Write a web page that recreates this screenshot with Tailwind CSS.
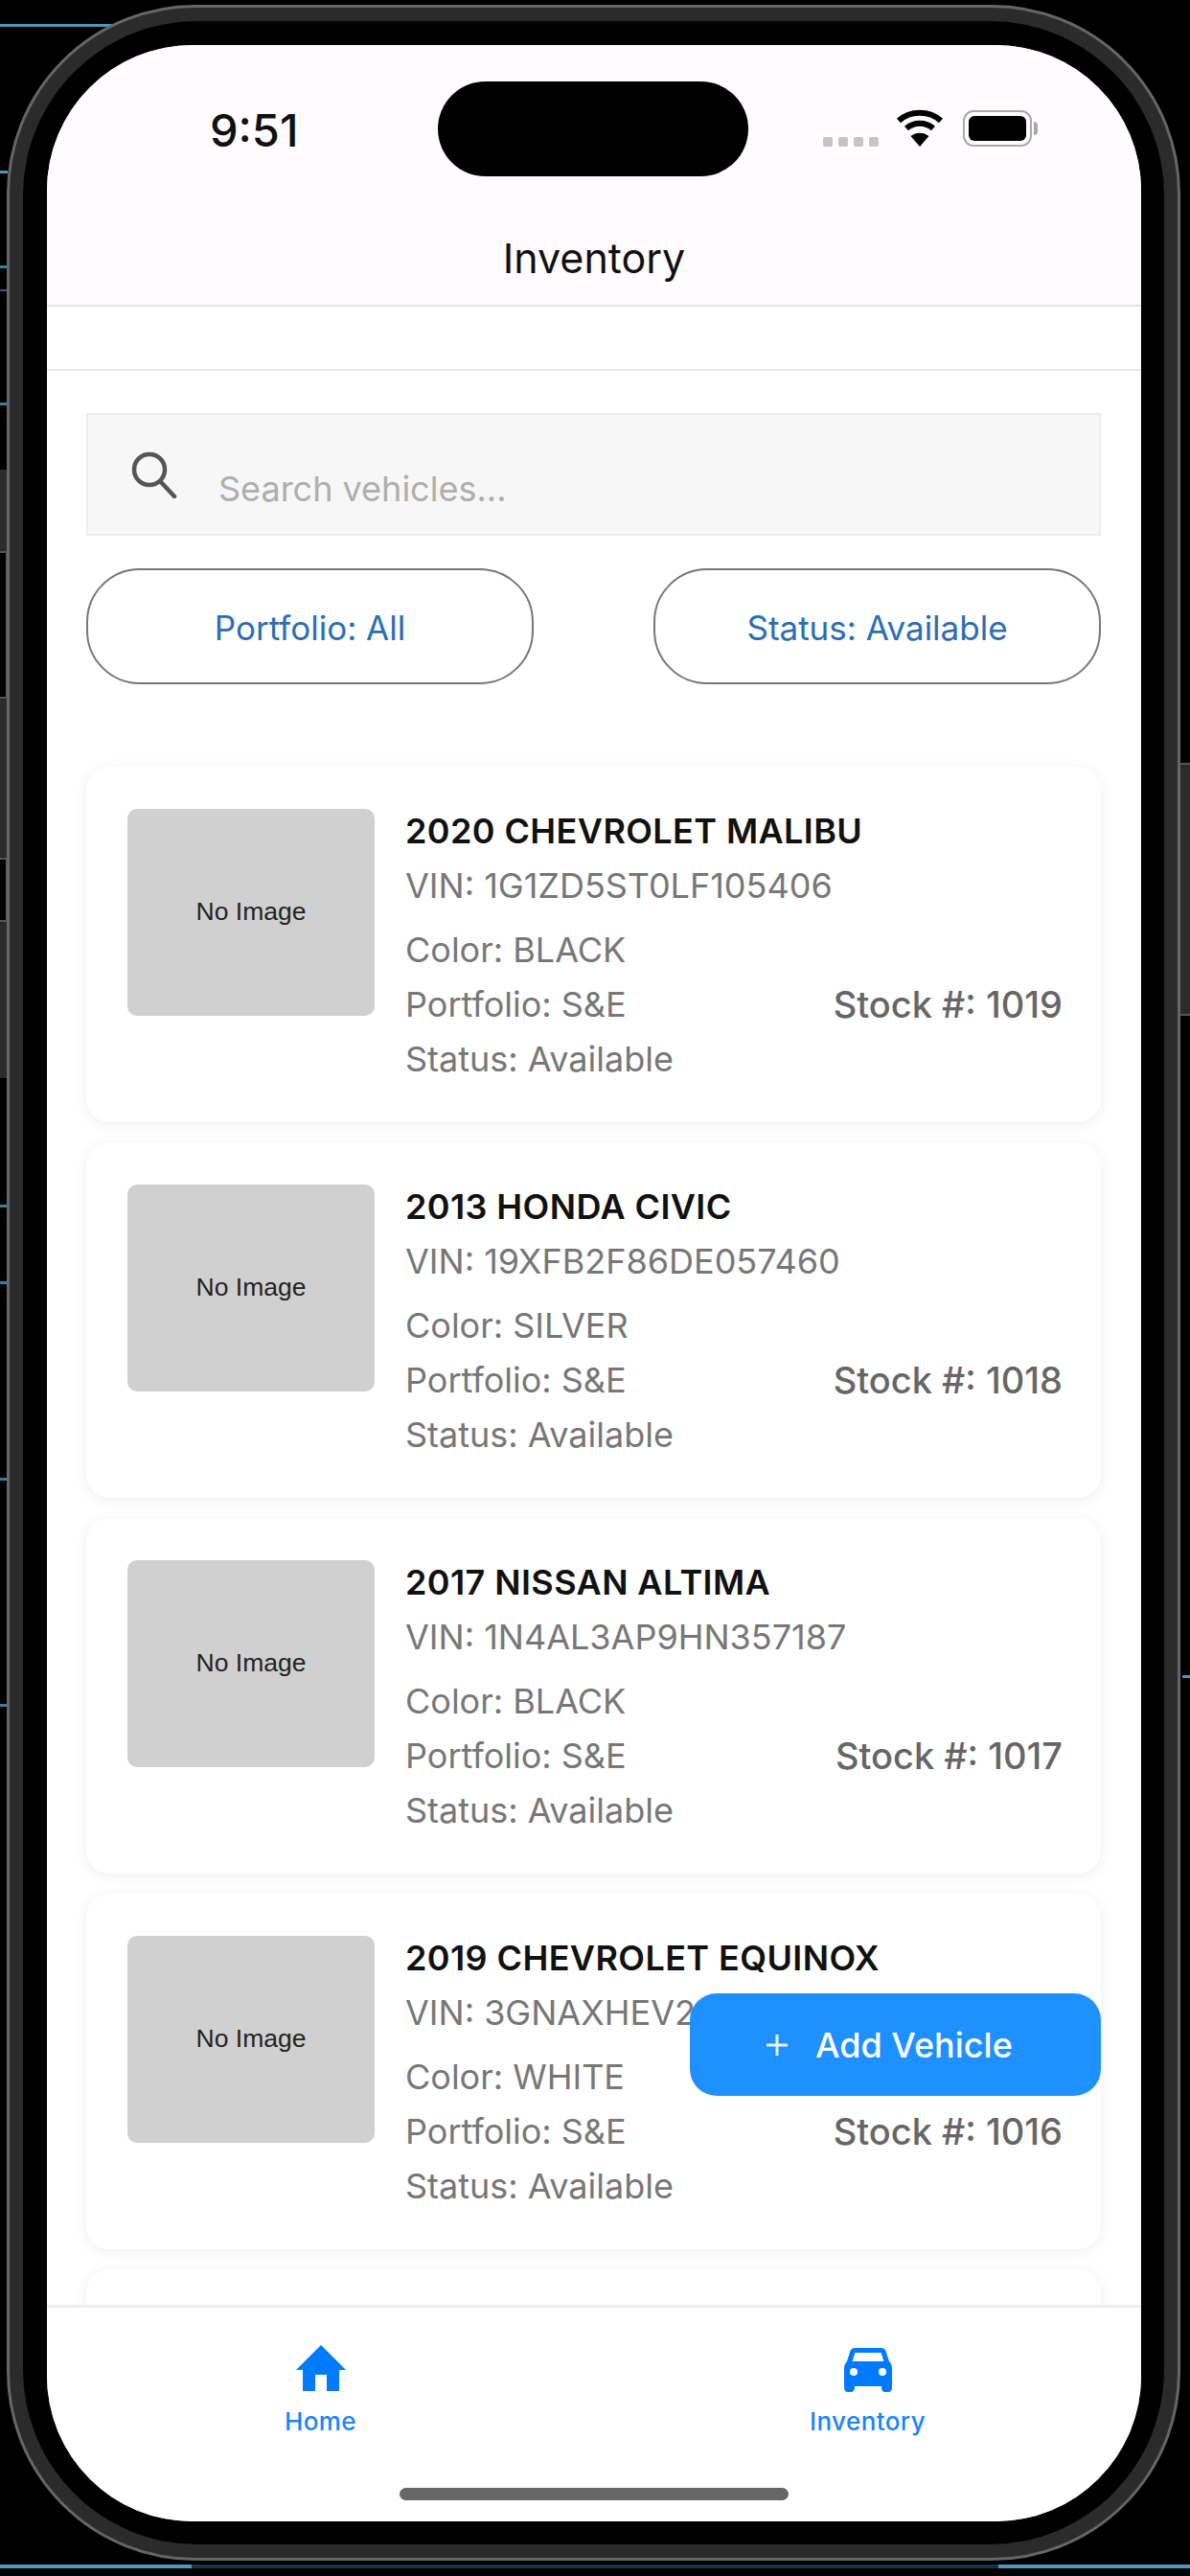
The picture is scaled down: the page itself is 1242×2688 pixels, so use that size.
<!DOCTYPE html>
<html>
<head>
<meta charset="utf-8">
<script src="https://cdn.jsdelivr.net/npm/@tailwindcss/browser@4"></script>
<title>Inventory</title>
</head>
<body class="bg-black font-['Inter',sans-serif]">
<div class="relative w-[1242px] h-[2688px] overflow-hidden bg-black pl-[7px] pt-[5px]">
  <!-- backdrop behind the device -->
  <div class="absolute left-0 top-[25px] w-[118px] h-[3px] bg-[#4a9ab8]"></div>
  <div class="absolute left-0 top-[178px] w-[8px] h-[3px] bg-[#4a9ab8]"></div>
  <div class="absolute left-0 top-[277px] w-[8px] h-[3px] bg-[#3a7f99]"></div>
  <div class="absolute left-0 top-[302px] w-[8px] h-[2px] bg-[#2a5f73]"></div>
  <div class="absolute left-0 top-[420px] w-[8px] h-[3px] bg-[#3a7f99]"></div>
  <div class="absolute left-0 top-[1257px] w-[8px] h-[3px] bg-[#3a7f99]"></div>
  <div class="absolute left-0 top-[1337px] w-[8px] h-[3px] bg-[#3a7f99]"></div>
  <div class="absolute left-0 top-[1542px] w-[8px] h-[3px] bg-[#3a7f99]"></div>
  <div class="absolute left-0 top-[1778px] w-[8px] h-[3px] bg-[#3a7f99]"></div>
  <div class="absolute right-0 top-[1748px] w-[8px] h-[3px] bg-[#4a9ab8]"></div>
  <div class="absolute left-0 right-0 top-[2676px] h-[4px] bg-[#143642]"></div>
  <div class="absolute left-0 top-[2676px] w-[200px] h-[4px] bg-[#4a9ab8]"></div>
  <div class="absolute right-0 top-[2676px] w-[200px] h-[4px] bg-[#4a9ab8]"></div>
  <!-- hardware buttons -->
  <div class="absolute left-0 top-[490px] w-[8px] h-[85px] bg-[#2b2b2b]"></div>
  <div class="absolute left-0 top-[575px] w-[8px] h-[154px] border-y-2 border-r-2 border-[#555] bg-black"></div>
  <div class="absolute left-0 top-[729px] w-[8px] h-[166px] bg-[#2b2b2b]"></div>
  <div class="absolute left-0 top-[895px] w-[8px] h-[67px] border-y-2 border-r-2 border-[#555] bg-black"></div>
  <div class="absolute left-0 top-[962px] w-[8px] h-[163px] bg-[#2b2b2b]"></div>
  <div class="absolute right-0 top-[796px] w-[12px] h-[264px] bg-[#2b2b2b] border-y-2 border-[#555]"></div>

  <!-- device -->
  <div class="relative w-[1225px] h-[2667px] rounded-[197px] border-[3px] border-[#666] bg-[#2b2b2b] p-[14px]">
    <div class="w-full h-full rounded-[182px] bg-black pl-[25px] pr-[24px] pt-[25px] pb-[24px]">
      <div class="relative w-[1142px] h-[2584px] rounded-[152px] overflow-hidden bg-white flex flex-col">

        <!-- header -->
        <div class="h-[273px] shrink-0 bg-[#fffcff] border-b-2 border-[#e4e2e4] flex flex-col">
          <div class="h-[150px] shrink-0 relative">
            <span class="absolute left-[170px] top-[57px] text-[47px] leading-[64px] font-medium text-[#111]">9:51</span>
            <div class="absolute left-[408px] top-[38px] w-[324px] h-[99px] rounded-full bg-black"></div>
            <div class="absolute left-[810px] top-[96px] flex gap-[6px]">
              <span class="w-[10px] h-[10px] rounded-[2px] bg-[#c4c4c4]"></span>
              <span class="w-[10px] h-[10px] rounded-[2px] bg-[#c4c4c4]"></span>
              <span class="w-[10px] h-[10px] rounded-[2px] bg-[#c4c4c4]"></span>
              <span class="w-[10px] h-[10px] rounded-[2px] bg-[#c4c4c4]"></span>
            </div>
            <svg class="absolute left-[886px] top-[67px]" width="50" height="40" viewBox="0 0 50 40" fill="none">
              <path d="M3 12 C15 1 35 1 47 12" stroke="#000" stroke-width="6"/>
              <path d="M11 20 C19 13 31 13 39 20" stroke="#000" stroke-width="6"/>
              <path d="M25 39 L15.5 28 C21 23.500 29 23.500 34.500 28 Z" fill="#000"/>
            </svg>
            <div class="absolute left-[956px] top-[68px] w-[72px] h-[38px] rounded-[11px] border-[2px] border-[#a8a8a8] p-[4px]">
              <div class="w-full h-full rounded-[6px] bg-black"></div>
            </div>
            <div class="absolute left-[1030px] top-[80px] w-[4px] h-[14px] rounded-r-full bg-[#a8a8a8]"></div>
          </div>
          <div class="text-center text-[43px] leading-[50px] mt-[47px] font-normal text-[#111]">Inventory</div>
        </div>

        <!-- thin bar -->
        <div class="h-[67px] shrink-0 bg-white border-b-2 border-[#e8e8e8]"></div>

        <!-- scroll content -->
        <div class="flex-1 min-h-0 overflow-hidden pl-[41px] pr-[42px] pt-[44px]">
          <div class="h-[128px] bg-[#f7f7f7] border-2 border-[#ececec] flex items-start">
            <svg class="ml-[45px] mt-[37px] shrink-0" width="48" height="50" viewBox="0 0 48 50" fill="none">
              <circle cx="19" cy="20" r="16" stroke="#555" stroke-width="4.500"/>
              <path d="M31 33 L45 48" stroke="#555" stroke-width="4.500" stroke-linecap="round"/>
            </svg>
            <span class="ml-[43px] mt-[55px] text-[36px] leading-[44px] text-[#aeaeae]">Search vehicles...</span>
          </div>

          <div class="mt-[34px] flex justify-between">
            <div class="w-[467px] h-[121px] rounded-[56px] border-2 border-[#77777c] flex items-center justify-center pt-[4px] text-[35px] text-[#2a6eb5]">Portfolio: All</div>
            <div class="w-[467px] h-[121px] rounded-[56px] border-2 border-[#77777c] flex items-center justify-center pt-[4px] text-[35px] text-[#2a6eb5]">Status: Available</div>
          </div>

          <div class="mt-[86px] flex flex-col gap-[21px]">
            <div class="h-[371px] rounded-[24px] bg-white shadow-[0_2px_14px_rgba(0,0,0,0.07)] pl-[43px] pr-[40px] pt-[44px] flex gap-[32px]">
              <div class="w-[258px] h-[216px] shrink-0 rounded-[10px] bg-[#d0d0d0] flex items-center justify-center font-['Liberation_Sans',sans-serif] text-[26.5px] text-[#222]">No Image</div>
              <div class="flex-1 min-w-0">
                <div class="text-[36px] leading-[57px] font-semibold tracking-[0.4px] text-[#111] -mt-[5px]">2020 CHEVROLET MALIBU</div>
                <div class="text-[36px] leading-[57px] text-[#777]">VIN: 1G1ZD5ST0LF105406</div>
                <div class="mt-[10px] flex items-center justify-between">
                  <div class="text-[36px] leading-[57px] text-[#777]">
                    <div>Color: BLACK</div>
                    <div>Portfolio: S&amp;E</div>
                    <div>Status: Available</div>
                  </div>
                  <div class="text-[38px] font-medium text-[#666]">Stock #: 1019</div>
                </div>
              </div>
            </div>

            <div class="h-[371px] rounded-[24px] bg-white shadow-[0_2px_14px_rgba(0,0,0,0.07)] pl-[43px] pr-[40px] pt-[44px] flex gap-[32px]">
              <div class="w-[258px] h-[216px] shrink-0 rounded-[10px] bg-[#d0d0d0] flex items-center justify-center font-['Liberation_Sans',sans-serif] text-[26.5px] text-[#222]">No Image</div>
              <div class="flex-1 min-w-0">
                <div class="text-[36px] leading-[57px] font-semibold tracking-[0.4px] text-[#111] -mt-[5px]">2013 HONDA CIVIC</div>
                <div class="text-[36px] leading-[57px] text-[#777]">VIN: 19XFB2F86DE057460</div>
                <div class="mt-[10px] flex items-center justify-between">
                  <div class="text-[36px] leading-[57px] text-[#777]">
                    <div>Color: SILVER</div>
                    <div>Portfolio: S&amp;E</div>
                    <div>Status: Available</div>
                  </div>
                  <div class="text-[38px] font-medium text-[#666]">Stock #: 1018</div>
                </div>
              </div>
            </div>

            <div class="h-[371px] rounded-[24px] bg-white shadow-[0_2px_14px_rgba(0,0,0,0.07)] pl-[43px] pr-[40px] pt-[44px] flex gap-[32px]">
              <div class="w-[258px] h-[216px] shrink-0 rounded-[10px] bg-[#d0d0d0] flex items-center justify-center font-['Liberation_Sans',sans-serif] text-[26.5px] text-[#222]">No Image</div>
              <div class="flex-1 min-w-0">
                <div class="text-[36px] leading-[57px] font-semibold tracking-[0.4px] text-[#111] -mt-[5px]">2017 NISSAN ALTIMA</div>
                <div class="text-[36px] leading-[57px] text-[#777]">VIN: 1N4AL3AP9HN357187</div>
                <div class="mt-[10px] flex items-center justify-between">
                  <div class="text-[36px] leading-[57px] text-[#777]">
                    <div>Color: BLACK</div>
                    <div>Portfolio: S&amp;E</div>
                    <div>Status: Available</div>
                  </div>
                  <div class="text-[38px] font-medium text-[#666]">Stock #: 1017</div>
                </div>
              </div>
            </div>

            <div class="h-[371px] rounded-[24px] bg-white shadow-[0_2px_14px_rgba(0,0,0,0.07)] pl-[43px] pr-[40px] pt-[44px] flex gap-[32px]">
              <div class="w-[258px] h-[216px] shrink-0 rounded-[10px] bg-[#d0d0d0] flex items-center justify-center font-['Liberation_Sans',sans-serif] text-[26.5px] text-[#222]">No Image</div>
              <div class="flex-1 min-w-0">
                <div class="text-[36px] leading-[57px] font-semibold tracking-[0.4px] text-[#111] -mt-[5px]">2019 CHEVROLET EQUINOX</div>
                <div class="text-[36px] leading-[57px] text-[#777]">VIN: 3GNAXHEV2</div>
                <div class="mt-[10px] flex items-center justify-between">
                  <div class="text-[36px] leading-[57px] text-[#777]">
                    <div>Color: WHITE</div>
                    <div>Portfolio: S&amp;E</div>
                    <div>Status: Available</div>
                  </div>
                  <div class="text-[38px] font-medium text-[#666]">Stock #: 1016</div>
                </div>
              </div>
            </div>

            <div class="h-[371px] shrink-0 rounded-[24px] bg-white shadow-[0_2px_14px_rgba(0,0,0,0.07)]"></div>
          </div>
        </div>

        <!-- floating button -->
        <div class="absolute left-[671px] top-[2033px] w-[429px] h-[107px] rounded-[28px] bg-[#1e90ff] flex items-center pl-[79px]">
          <svg width="24" height="24" viewBox="0 0 24 24" fill="none">
            <path d="M12 1 V23 M1 12 H23" stroke="#e8f3ff" stroke-width="3"/>
          </svg>
          <span class="ml-[28px] text-[36px] font-medium text-white">Add Vehicle</span>
        </div>

        <!-- tab bar -->
        <div class="h-[226px] shrink-0 bg-white border-t-[3px] border-[#eeeeee] flex relative">
          <div class="flex-1 flex flex-col items-center pt-[38px]">
            <svg width="54" height="50" viewBox="0 0 54 50">
              <path fill="#007aff" d="M27 1 L53 27 H46 V49 H33 V32 H21 V49 H8 V27 H1 Z"/>
            </svg>
            <span class="mt-[16px] text-[26px] leading-[30px] font-medium tracking-[0.4px] text-[#1a85ff]">Home</span>
          </div>
          <div class="flex-1 flex flex-col items-center pt-[42px]">
            <svg width="50" height="46" viewBox="0 0 50 46">
              <path fill="#007aff" fill-rule="evenodd" d="M11 0 H39 Q42 0 43.500 3 L47 14 Q50 17 50 22 V41 Q50 46 46 46 H43 Q39 46 39 41 V40 H11 V41 Q11 46 7 46 H4 Q0 46 0 41 V22 Q0 17 3 14 L6.500 3 Q8 0 11 0 Z M11.500 5 L8.500 14 H41.500 L38.500 5 Z M10 21 A4 4 0 1 0 10 29 A4 4 0 1 0 10 21 Z M40 21 A4 4 0 1 0 40 29 A4 4 0 1 0 40 21 Z"/>
            </svg>
            <span class="mt-[16px] text-[26px] leading-[30px] font-medium tracking-[0.4px] text-[#1a85ff]">Inventory</span>
          </div>
          <div class="absolute left-[368px] top-[188px] w-[406px] h-[13px] rounded-full bg-[#666]"></div>
        </div>
      </div>
    </div>
  </div>
</div>
</body>
</html>
